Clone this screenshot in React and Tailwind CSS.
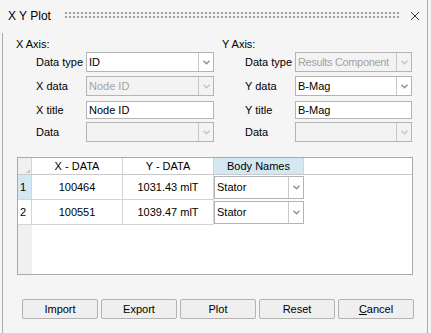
import React from 'react';

const Arrow = ({ disabled }) => (
    <svg width="7" height="5" viewBox="0 0 7 5">
        <polyline points="0.5,0.8 3.5,3.8 6.5,0.8" fill="none" stroke={disabled ? '#c4c4c4' : '#8f8f8f'} strokeWidth="1.4" />
    </svg>
);

const Combo = ({ value, width, disabled, tight }) => (
    <div className={`flex h-[20px] border border-[#b4b4b4] ${disabled ? 'bg-[#f3f3f3]' : 'bg-white'} ${width}`}>
        <div className={`flex-1 flex items-center pl-[2px] overflow-hidden whitespace-nowrap ${tight ? 'tracking-[-0.35px]' : ''} ${disabled ? 'text-[#a3a3a3]' : 'text-black'}`}>{value}</div>
        <div className="w-[15px] shrink-0 border-l border-[#c8c8c8] flex items-center justify-center">
            <Arrow disabled={disabled} />
        </div>
    </div>
);

const TextBox = ({ value, width }) => (
    <div className={`flex items-center h-[18px] border border-[#b4b4b4] bg-white pl-[2px] ${width}`}>{value}</div>
);

const Row = ({ label, children, className, indent }) => (
    <div className={`flex items-center h-[20px] ${indent} ${className}`}>
        <div className="w-[50px]">{label}</div>
        {children}
    </div>
);

const rows = [
    { n: '1', x: '100464', y: '1031.43 mlT', selected: true },
    { n: '2', x: '100551', y: '1039.47 mlT', selected: false },
];

const buttons = ['Import', 'Export', 'Plot', 'Reset'];

export default function App() {
    return (
        <div className="w-[431px] h-[333px] bg-[#f5f5f5] font-['Liberation_Sans',sans-serif] text-[11px] text-black overflow-hidden">
            <div className="w-[428px] h-full border-r border-[#ababab]">
                {/* title bar */}
                <div className="h-[33px] flex items-center pl-[8px] pb-[1px]">
                    <span className="text-[12px] w-[57px]">X Y Plot</span>
                    <svg width="334" height="7" className="mb-[2px]">
                        <defs>
                            <pattern id="grip" width="4" height="4" patternUnits="userSpaceOnUse">
                                <rect x="0" y="0" width="2" height="2" fill="#9c9c9c" />
                            </pattern>
                        </defs>
                        <rect x="0" y="0" width="334" height="6" fill="url(#grip)" />
                    </svg>
                    <svg width="10" height="10" className="ml-[11px] mb-[1px]" viewBox="0 0 10 10">
                        <path d="M1 1 L9 9 M9 1 L1 9" stroke="#3a3a3a" strokeWidth="1" />
                    </svg>
                </div>

                {/* body */}
                <div className="ml-[2px] h-[300px] border-l border-[#ababab] pt-[4px]">
                    <div className="flex pl-[13px]">
                        <div className="w-[206px]">
                            <div className="h-[14px] leading-[14px]">X Axis:</div>
                            <Row label="Data type" indent="pl-[20px]" className="mt-[1px]">
                                <Combo value="ID" width="w-[128px]" />
                            </Row>
                            <Row label="X data" indent="pl-[20px]" className="mt-[4px]">
                                <Combo value="Node ID" width="w-[128px]" disabled />
                            </Row>
                            <Row label="X title" indent="pl-[20px]" className="mt-[4px]">
                                <TextBox value="Node ID" width="w-[128px]" />
                            </Row>
                            <Row label="Data" indent="pl-[20px]" className="mt-[2px]">
                                <Combo value="" width="w-[128px]" disabled />
                            </Row>
                        </div>
                        <div className="w-[200px]">
                            <div className="h-[14px] leading-[14px]">Y Axis:</div>
                            <Row label="Data type" indent="pl-[23px]" className="mt-[1px]">
                                <Combo value="Results Component" width="w-[117px]" disabled tight />
                            </Row>
                            <Row label="Y data" indent="pl-[23px]" className="mt-[4px]">
                                <Combo value="B-Mag" width="w-[117px]" />
                            </Row>
                            <Row label="Y title" indent="pl-[23px]" className="mt-[4px]">
                                <TextBox value="B-Mag" width="w-[117px]" />
                            </Row>
                            <Row label="Data" indent="pl-[23px]" className="mt-[2px]">
                                <Combo value="" width="w-[117px]" disabled />
                            </Row>
                        </div>
                    </div>

                    {/* data grid */}
                    <div className="ml-[14px] mt-[15px] w-[396px] h-[118px] border border-[#a9a9a9] bg-white flex flex-col">
                        <div className="flex h-[17px] border-b border-[#c9c9c9] shrink-0">
                            <div className="w-[14px] bg-[#f0f0f0] border-r border-[#d4d4d4] flex items-end justify-end pr-[1px] pb-[1px]">
                                <svg width="4" height="4"><polygon points="4,0 4,4 0,4" fill="#c6c6c6" /></svg>
                            </div>
                            <div className="w-[91px] border-r border-[#d4d4d4] flex items-center justify-center">X - DATA</div>
                            <div className="w-[91px] border-r border-[#d4d4d4] flex items-center justify-center">Y - DATA</div>
                            <div className="w-[90px] border-r border-[#d4d4d4] bg-[#d4e8f2] flex items-center justify-center">Body Names</div>
                            <div className="flex-1" />
                        </div>
                        {rows.map((r) => (
                            <div key={r.n} className="flex h-[25px] shrink-0">
                                <div className={`w-[14px] border-r border-b border-[#d4d4d4] flex items-center pl-[2px] ${r.selected ? 'bg-[#d4e8f2]' : 'bg-white'}`}>{r.n}</div>
                                <div className="w-[91px] border-r border-b border-[#d4d4d4] flex items-center justify-center">{r.x}</div>
                                <div className="w-[91px] border-r border-b border-[#d4d4d4] flex items-center justify-center">{r.y}</div>
                                <div className="w-[90px] pt-[1px]">
                                    <div className="flex h-[23px] border border-[#b4b4b4] bg-white">
                                        <div className="flex-1 flex items-center pl-[2px]">Stator</div>
                                        <div className="w-[15px] border-l border-[#c8c8c8] flex items-center justify-center">
                                            <Arrow />
                                        </div>
                                    </div>
                                </div>
                                <div className="flex-1" />
                            </div>
                        ))}
                        <div className="flex flex-1">
                            <div className="w-[14px] bg-[#f0f0f0]" />
                        </div>
                    </div>

                    {/* buttons */}
                    <div className="flex gap-[3px] pl-[19px] mt-[24px]">
                        {buttons.map((b) => (
                            <button key={b} className="w-[76px] h-[20px] border border-[#b2b2b2] rounded-[2px] bg-[#efefef] flex items-center justify-center">{b}</button>
                        ))}
                        <button className="w-[76px] h-[20px] border border-[#b2b2b2] rounded-[2px] bg-[#efefef] flex items-center justify-center">
                            <span><span className="underline">C</span>ancel</span>
                        </button>
                    </div>
                </div>
            </div>
        </div>
    );
}
